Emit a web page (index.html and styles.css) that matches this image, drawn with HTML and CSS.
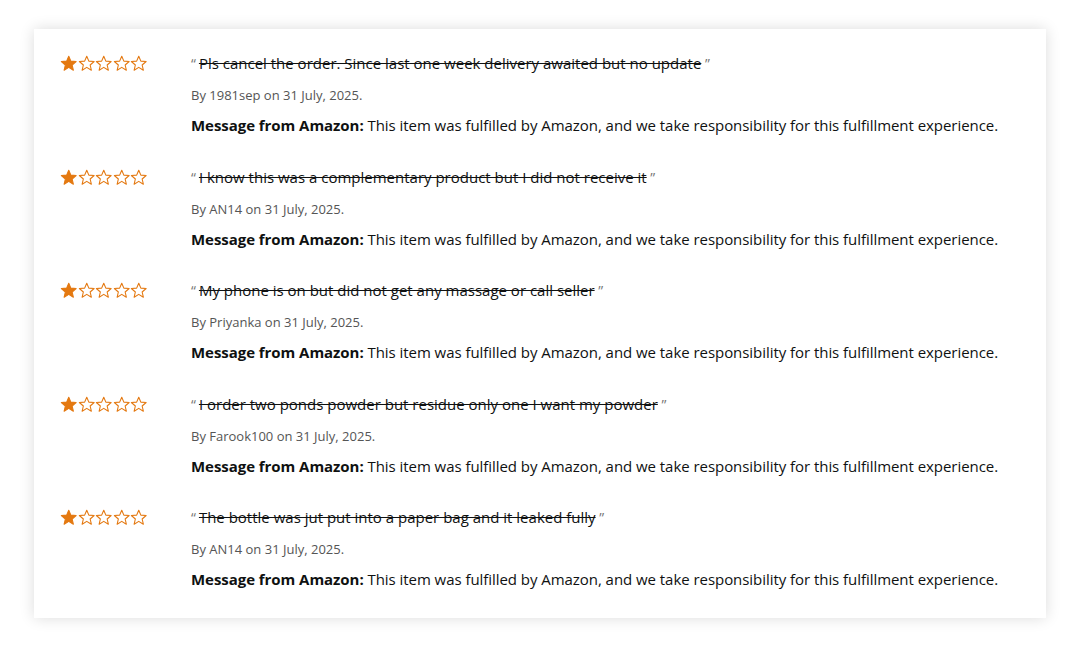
FILE: index.html
```html
<html>
<head>
    <meta name="viewport" content="width=device-width">
    <title>Reviews</title>
    <link rel="stylesheet" href="styles.css">
</head>
<body>

<svg width="0" height="0" class="defs">
    <defs>
        <path id="star" d="M8.5 1.2 L10.6 6.1 L15.9 6.5 L11.9 10 L13.1 15.2 L8.5 12.4 L3.9 15.2 L5.1 10 L1.1 6.5 L6.4 6.1 Z"/>
    </defs>
</svg>

<div class="card">

    <div class="review">
        <div class="stars">
            <svg class="star full" viewBox="0 0 17 16"><use href="#star"/></svg>
            <svg class="star" viewBox="0 0 17 16"><use href="#star"/></svg>
            <svg class="star" viewBox="0 0 17 16"><use href="#star"/></svg>
            <svg class="star" viewBox="0 0 17 16"><use href="#star"/></svg>
            <svg class="star" viewBox="0 0 17 16"><use href="#star"/></svg>
        </div>
        <div class="body">
            <div class="quote"><span class="mark">&ldquo;</span><s>Pls cancel the order. Since last one week delivery awaited but no update</s><span class="mark"> &rdquo;</span></div>
            <div class="by">By 1981sep on 31 July, 2025.</div>
            <div class="msg"><b>Message from Amazon:</b> This item was fulfilled by Amazon, and we take responsibility for this fulfillment experience.</div>
        </div>
    </div>

    <div class="review">
        <div class="stars">
            <svg class="star full" viewBox="0 0 17 16"><use href="#star"/></svg>
            <svg class="star" viewBox="0 0 17 16"><use href="#star"/></svg>
            <svg class="star" viewBox="0 0 17 16"><use href="#star"/></svg>
            <svg class="star" viewBox="0 0 17 16"><use href="#star"/></svg>
            <svg class="star" viewBox="0 0 17 16"><use href="#star"/></svg>
        </div>
        <div class="body">
            <div class="quote"><span class="mark">&ldquo;</span><s>I know this was a complementary product but I did not receive it</s><span class="mark"> &rdquo;</span></div>
            <div class="by">By AN14 on 31 July, 2025.</div>
            <div class="msg"><b>Message from Amazon:</b> This item was fulfilled by Amazon, and we take responsibility for this fulfillment experience.</div>
        </div>
    </div>

    <div class="review">
        <div class="stars">
            <svg class="star full" viewBox="0 0 17 16"><use href="#star"/></svg>
            <svg class="star" viewBox="0 0 17 16"><use href="#star"/></svg>
            <svg class="star" viewBox="0 0 17 16"><use href="#star"/></svg>
            <svg class="star" viewBox="0 0 17 16"><use href="#star"/></svg>
            <svg class="star" viewBox="0 0 17 16"><use href="#star"/></svg>
        </div>
        <div class="body">
            <div class="quote"><span class="mark">&ldquo;</span><s>My phone is on but did not get any massage or call seller</s><span class="mark"> &rdquo;</span></div>
            <div class="by">By Priyanka on 31 July, 2025.</div>
            <div class="msg"><b>Message from Amazon:</b> This item was fulfilled by Amazon, and we take responsibility for this fulfillment experience.</div>
        </div>
    </div>

    <div class="review">
        <div class="stars">
            <svg class="star full" viewBox="0 0 17 16"><use href="#star"/></svg>
            <svg class="star" viewBox="0 0 17 16"><use href="#star"/></svg>
            <svg class="star" viewBox="0 0 17 16"><use href="#star"/></svg>
            <svg class="star" viewBox="0 0 17 16"><use href="#star"/></svg>
            <svg class="star" viewBox="0 0 17 16"><use href="#star"/></svg>
        </div>
        <div class="body">
            <div class="quote"><span class="mark">&ldquo;</span><s>I order two ponds powder but residue only one I want my powder</s><span class="mark"> &rdquo;</span></div>
            <div class="by">By Farook100 on 31 July, 2025.</div>
            <div class="msg"><b>Message from Amazon:</b> This item was fulfilled by Amazon, and we take responsibility for this fulfillment experience.</div>
        </div>
    </div>

    <div class="review">
        <div class="stars">
            <svg class="star full" viewBox="0 0 17 16"><use href="#star"/></svg>
            <svg class="star" viewBox="0 0 17 16"><use href="#star"/></svg>
            <svg class="star" viewBox="0 0 17 16"><use href="#star"/></svg>
            <svg class="star" viewBox="0 0 17 16"><use href="#star"/></svg>
            <svg class="star" viewBox="0 0 17 16"><use href="#star"/></svg>
        </div>
        <div class="body">
            <div class="quote"><span class="mark">&ldquo;</span><s>The bottle was jut put into a paper bag and it leaked fully</s><span class="mark"> &rdquo;</span></div>
            <div class="by">By AN14 on 31 July, 2025.</div>
            <div class="msg"><b>Message from Amazon:</b> This item was fulfilled by Amazon, and we take responsibility for this fulfillment experience.</div>
        </div>
    </div>

</div>

</body>
</html>
```

FILE: styles.css
```css
body {
    margin: 0;
    padding: 29px 34px 0 34px;
    background: #fff;
    font-family: "Open Sans", "Noto Sans", Arial, sans-serif;
    color: #0f1111;
}

.defs {
    position: absolute;
}

.card {
    background: #fff;
    box-shadow: 0 0 14px rgba(0, 0, 0, 0.14);
    padding: 24px 26px 29px 26px;
}

.review {
    display: flex;
    margin-bottom: 31.5px;
}

.review:last-child {
    margin-bottom: 0;
}

.stars {
    width: 131px;
    flex-shrink: 0;
    display: flex;
    padding-top: 2px;
    height: 16px;
}

.star {
    width: 17.5px;
    height: 16px;
    fill: #fff;
    stroke: #e47911;
    stroke-width: 1.1;
    stroke-linejoin: round;
}

.star.full {
    fill: #e47911;
}

.quote {
    font-size: 15px;
    line-height: 20px;
    height: 20px;
    white-space: nowrap;
}

.quote s {
    text-decoration-thickness: 1px;
}

.mark {
    color: #767676;
    font-size: 14px;
    line-height: 1;
    margin-right: 3px;
}

.by {
    margin-top: 12px;
    font-size: 13px;
    line-height: 20px;
    height: 20px;
    color: #555;
}

.msg {
    margin-top: 10px;
    font-size: 15px;
    line-height: 20px;
    height: 20px;
    white-space: nowrap;
    letter-spacing: -0.05px;
}

.msg b {
    font-weight: 700;
}
```
